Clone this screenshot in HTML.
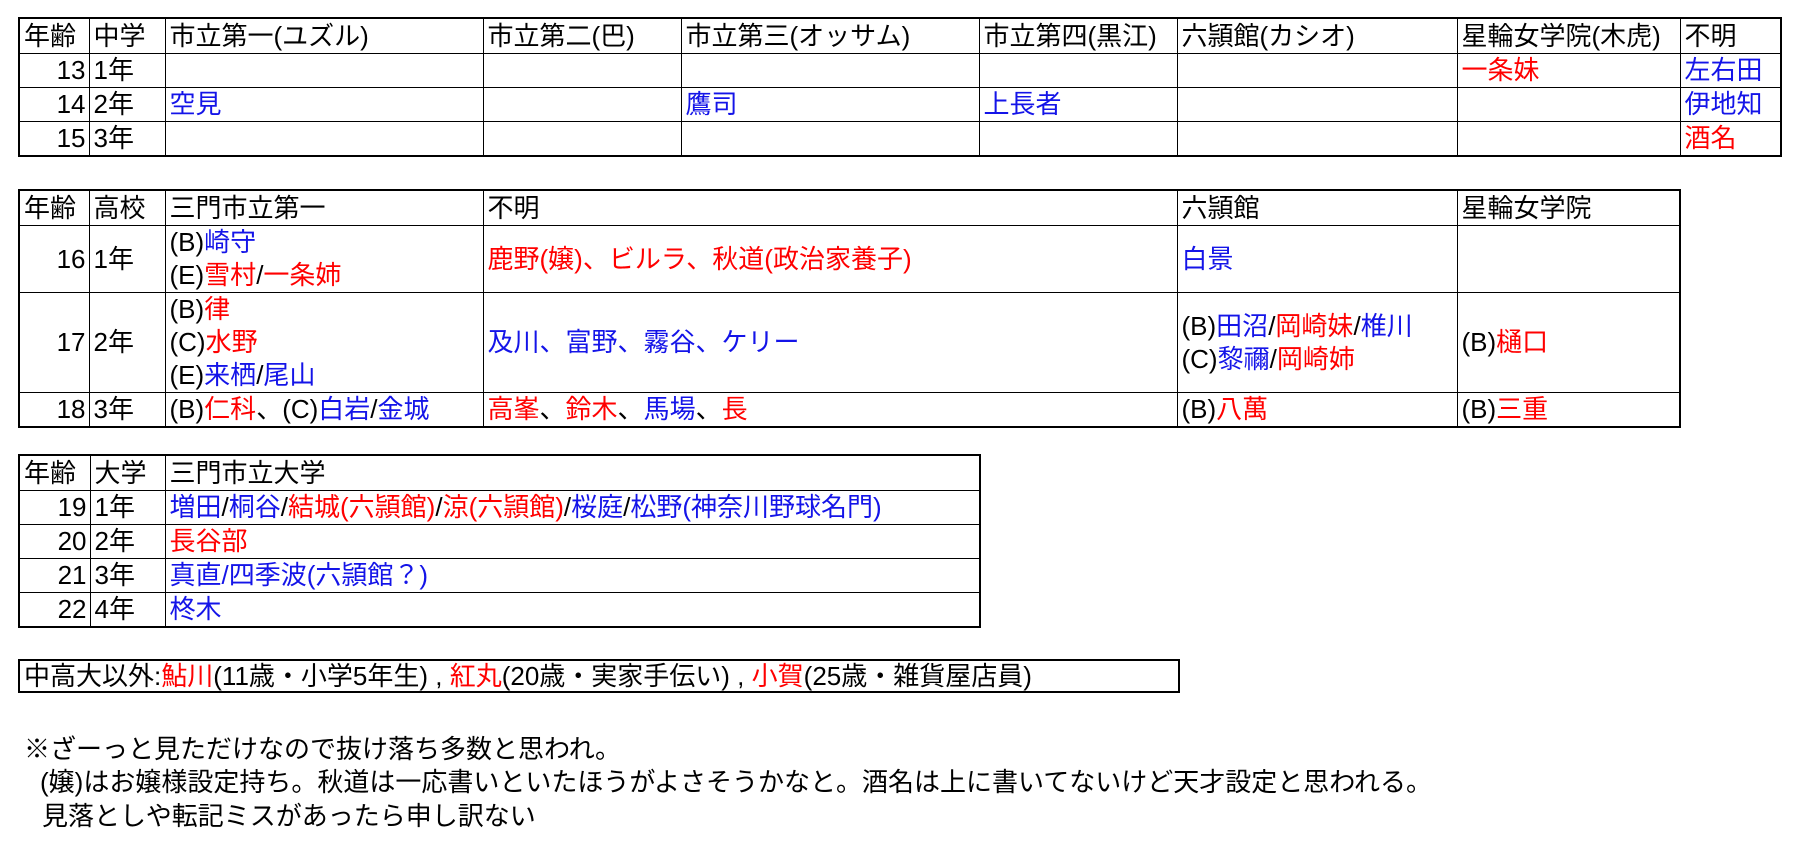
<!DOCTYPE html>
<html><head><meta charset="utf-8">
<style>
body{margin:0;background:#fff;width:1813px;height:850px;overflow:hidden;position:relative;font-family:"Liberation Sans","Noto Sans CJK JP",sans-serif;font-size:26px;color:#000}
table{position:absolute;border-collapse:collapse;table-layout:fixed;border:2.5px solid #000}
td{border:1px solid #000;padding:0 0 0 4px;line-height:33px;height:33px;vertical-align:middle;white-space:nowrap;overflow:hidden}
td.n{text-align:right;padding:0 3px 0 0}
.b{color:#1414e8}.r{color:#f00}
.h td{height:34px}
.note{position:absolute;white-space:nowrap;line-height:33px}
</style></head><body>

<table style="left:18px;top:17px;width:1762px">
<colgroup><col style="width:70px"><col style="width:76px"><col style="width:318px"><col style="width:198px"><col style="width:298px"><col style="width:198px"><col style="width:280px"><col style="width:223px"><col style="width:101px"></colgroup>
<tr class="h"><td>年齢</td><td>中学</td><td>市立第一(ユズル)</td><td>市立第二(巴)</td><td>市立第三(オッサム)</td><td>市立第四(黒江)</td><td>六頴館(カシオ)</td><td>星輪女学院(木虎)</td><td>不明</td></tr>
<tr><td class="n">13</td><td>1年</td><td></td><td></td><td></td><td></td><td></td><td class="r">一条妹</td><td class="b">左右田</td></tr>
<tr><td class="n">14</td><td>2年</td><td class="b">空見</td><td></td><td class="b">鷹司</td><td class="b">上長者</td><td></td><td></td><td class="b">伊地知</td></tr>
<tr><td class="n">15</td><td>3年</td><td></td><td></td><td></td><td></td><td></td><td></td><td class="r">酒名</td></tr>
</table>

<table style="left:18px;top:189px;width:1661px">
<colgroup><col style="width:70px"><col style="width:76px"><col style="width:318px"><col style="width:694px"><col style="width:280px"><col style="width:223px"></colgroup>
<tr class="h"><td>年齢</td><td>高校</td><td>三門市立第一</td><td>不明</td><td>六頴館</td><td>星輪女学院</td></tr>
<tr><td class="n" style="height:66px">16</td><td>1年</td><td>(B)<span class="b">崎守</span><br>(E)<span class="r">雪村</span>/<span class="r">一条姉</span></td><td class="r">鹿野(嬢)、ビルラ、秋道(政治家養子)</td><td class="b">白景</td><td></td></tr>
<tr><td class="n" style="height:99px">17</td><td>2年</td><td>(B)<span class="r">律</span><br>(C)<span class="r">水野</span><br>(E)<span class="b">来栖</span>/<span class="b">尾山</span></td><td class="b">及川、富野、霧谷、ケリー</td><td>(B)<span class="b">田沼</span>/<span class="r">岡崎妹</span>/<span class="b">椎川</span><br>(C)<span class="b">黎禰</span>/<span class="r">岡崎姉</span></td><td>(B)<span class="r">樋口</span></td></tr>
<tr><td class="n">18</td><td>3年</td><td>(B)<span class="r">仁科</span>、(C)<span class="b">白岩</span>/<span class="b">金城</span></td><td><span class="r">高峯</span>、<span class="r">鈴木</span>、<span class="b">馬場</span>、<span class="r">長</span></td><td>(B)<span class="r">八萬</span></td><td>(B)<span class="r">三重</span></td></tr>
</table>

<table style="left:18px;top:454px;width:961px">
<colgroup><col style="width:71px"><col style="width:75px"><col style="width:815px"></colgroup>
<tr class="h"><td>年齢</td><td>大学</td><td>三門市立大学</td></tr>
<tr><td class="n">19</td><td>1年</td><td><span class="b">増田</span>/<span class="b">桐谷</span>/<span class="r">結城(六頴館)</span>/<span class="r">涼(六頴館)</span>/<span class="b">桜庭</span>/<span class="b">松野(神奈川野球名門)</span></td></tr>
<tr><td class="n">20</td><td>2年</td><td class="r">長谷部</td></tr>
<tr><td class="n">21</td><td>3年</td><td class="b">真直/四季波(六頴館？)</td></tr>
<tr><td class="n">22</td><td>4年</td><td class="b">柊木</td></tr>
</table>

<table style="left:18px;top:659px;width:1162px">
<tr><td style="border:none;height:30px;line-height:30px">中高大以外:<span class="r">鮎川</span>(11歳・小学5年生) , <span class="r">紅丸</span>(20歳・実家手伝い) , <span class="r">小賀</span>(25歳・雑貨屋店員)</td></tr>
</table>

<div class="note" style="left:24px;top:733px">※ざーっと見ただけなので抜け落ち多数と思われ。</div>
<div class="note" style="left:40px;top:766px">(嬢)はお嬢様設定持ち。秋道は一応書いといたほうがよさそうかなと。酒名は上に書いてないけど天才設定と思われる。</div>
<div class="note" style="left:42px;top:800px">見落としや転記ミスがあったら申し訳ない</div>
</body></html>
